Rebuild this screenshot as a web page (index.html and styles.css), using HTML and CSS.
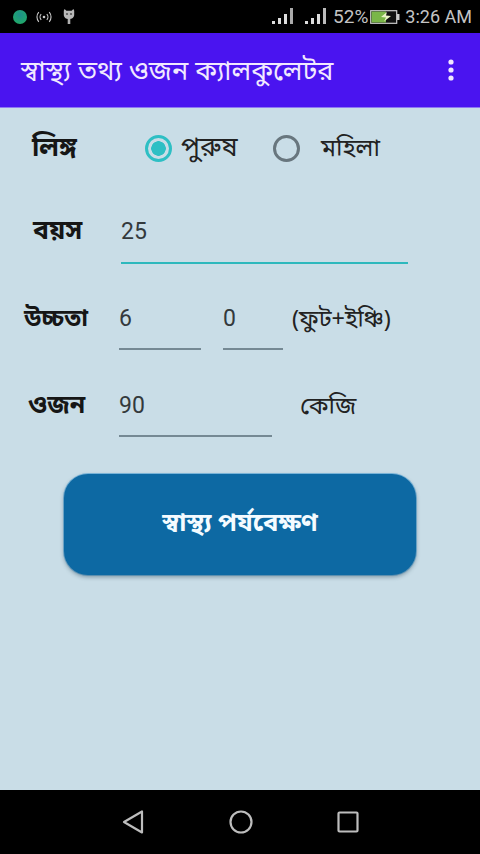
FILE: index.html
```html
<!DOCTYPE html>
<html lang="bn">
<head>
<meta charset="utf-8">
<title>স্বাস্থ্য তথ্য ওজন ক্যালকুলেটর</title>
<link rel="stylesheet" href="styles.css">
</head>
<body>
<div class="phone">
  <header class="status">
    <div class="status-left">
      <span class="dot"></span>
      <svg class="ic-hotspot" viewBox="0 0 18 12" width="18" height="12" aria-hidden="true"><circle cx="9" cy="6" r="1.3" fill="#ccc"/><path d="M6.2 3.2a4 4 0 0 0 0 5.6M11.8 3.2a4 4 0 0 1 0 5.6M3.8 1.2a7.2 7.2 0 0 0 0 9.6M14.2 1.2a7.2 7.2 0 0 1 0 9.6" fill="none" stroke="#ccc" stroke-width="1.1"/></svg>
      <svg class="ic-bug" viewBox="0 0 14 18" width="14" height="18" aria-hidden="true"><path d="M2.600 1l1.800 1.800h5.200L11.400 1l.8 1.800v4c0 2.600-2.200 4.400-5.200 4.400S1.800 9.400 1.800 6.800v-4z" fill="#b8b8b8"/><rect x="5.700" y="11" width="2.600" height="5" fill="#b0b0b0"/><circle cx="5" cy="6" r="1.100" fill="#555"/><circle cx="9" cy="6" r="1.100" fill="#555"/></svg>
    </div>
    <div class="status-right">
      <svg class="ic-signal" viewBox="0 0 22 18" width="22" height="18" aria-hidden="true"><rect x="0" y="13" width="3" height="3" fill="#ddd"/><rect x="6" y="10" width="3" height="6" fill="#ddd"/><rect x="12" y="6" width="3" height="10" fill="#ddd"/><rect x="18" y="0" width="3" height="16" fill="#aaa"/></svg>
      <svg class="ic-signal second" viewBox="0 0 22 18" width="22" height="18" aria-hidden="true"><rect x="0" y="13" width="3" height="3" fill="#ddd"/><rect x="6" y="10" width="3" height="6" fill="#ddd"/><rect x="12" y="6" width="3" height="10" fill="#ddd"/><rect x="18" y="0" width="3" height="16" fill="#bbb"/></svg>
      <span class="pct">52%</span>
      <svg class="ic-battery" viewBox="0 0 30 16" width="30" height="16" aria-hidden="true"><rect x=".7" y="1.700" width="26" height="12.600" fill="#111" stroke="#ccc" stroke-width="1.200"/><rect x="27" y="5" width="2.500" height="6" fill="#ccc"/><rect x="1.500" y="2.500" width="14.500" height="11" fill="#7ab648"/><path d="M17 3l-6 5 5 .5-2 4 7-5.500-5-.5z" fill="#e9f3c6"/></svg>
      <span class="time">3:26 AM</span>
    </div>
  </header>

  <div class="appbar">
    <h1 class="title">স্বাস্থ্য তথ্য ওজন ক্যালকুলেটর</h1>
    <svg class="ic-more" viewBox="0 0 8 24" width="8" height="24" aria-hidden="true"><circle cx="4" cy="4" r="2.600" fill="#f0e6ff"/><circle cx="4" cy="12" r="2.600" fill="#f0e6ff"/><circle cx="4" cy="20" r="2.600" fill="#f0e6ff"/></svg>
  </div>

  <main class="content">
    <div class="row row-gender">
      <span class="label label-gender">লিঙ্গ</span>
      <span class="radio radio-on"></span>
      <span class="opt opt-male">পুরুষ</span>
      <span class="radio radio-off"></span>
      <span class="opt opt-female">মহিলা</span>
    </div>

    <div class="row row-age">
      <span class="label label-age">বয়স</span>
      <div class="field field-age">25</div>
    </div>

    <div class="row row-height">
      <span class="label label-height">উচ্চতা</span>
      <div class="field field-feet">6</div>
      <div class="field field-inch">0</div>
      <span class="unit unit-height">(ফুট+ইঞ্চি)</span>
    </div>

    <div class="row row-weight">
      <span class="label label-weight">ওজন</span>
      <div class="field field-weight">90</div>
      <span class="unit unit-weight">কেজি</span>
    </div>

    <button class="cta" type="button">স্বাস্থ্য পর্যবেক্ষণ</button>
  </main>

  <nav class="navbar">
    <svg viewBox="0 0 24 26" width="24" height="26" aria-hidden="true"><path d="M21 2.500v21L3 13z" fill="none" stroke="#bdbdbd" stroke-width="2.200" stroke-linejoin="round"/></svg>
    <svg viewBox="0 0 26 26" width="26" height="26" aria-hidden="true"><circle cx="13" cy="13" r="10.500" fill="none" stroke="#bdbdbd" stroke-width="2.200"/></svg>
    <svg viewBox="0 0 24 24" width="24" height="24" aria-hidden="true"><rect x="2.500" y="2.500" width="19" height="19" rx="1" fill="none" stroke="#bdbdbd" stroke-width="2.200"/></svg>
  </nav>
</div>
</body>
</html>
```
FILE: styles.css
```css
* { box-sizing: border-box; }
html, body { margin: 0; padding: 0; }
body {
  width: 480px;
  height: 854px;
  overflow: hidden;
  font-family: "Noto Sans Bengali", "Noto Sans", Roboto, "Liberation Sans", sans-serif;
  background: #c9dde7;
}
.phone { width: 480px; height: 854px; display: flex; flex-direction: column; }

.status {
  height: 33px;
  background: #000;
  display: flex;
  align-items: center;
  justify-content: space-between;
  padding: 0 8px 0 13px;
  flex: none;
}
.status-left, .status-right { display: flex; align-items: center; }
.dot {
  width: 14px; height: 14px; border-radius: 50%;
  background: radial-gradient(circle at 50% 35%, #1d8f8a, #22b060);
}
.ic-hotspot { margin-left: 8px; }
.ic-bug { margin-left: 9px; }
.ic-signal.second { margin-left: 11px; }
.pct { margin-left: 6px; color: #c4c4c4; font: 19px Roboto, sans-serif; }
.ic-battery { margin-left: 2px; }
.time { margin-left: 5px; color: #c4c4c4; font: 18px Roboto, sans-serif; }

.appbar {
  height: 75px;
  background: #4a14f0;
  display: flex;
  align-items: center;
  justify-content: space-between;
  padding: 0 25px 0 21px;
  flex: none;
  border-bottom: 1px solid #8f78f2;
}
.title { margin: 6px 0 0; font-size: 27px; font-weight: 400; color: #f1e9ff; line-height: 1; white-space: nowrap; }

.content { flex: 1; min-height: 0; display: flex; flex-direction: column; }
.row { display: flex; align-items: flex-start; flex: none; }
.label { font-weight: 700; font-size: 24px; line-height: 30px; color: #161616; white-space: nowrap; padding-top: 2px; }
.field {
  font: 23px/32px Roboto, sans-serif;
  color: #33393c;
  border-bottom: 2px solid #75899400;
  border-bottom-color: #758994;
  height: 47px;
}
.opt, .unit { font-size: 24.500px; line-height: 30px; color: #222; white-space: nowrap; padding-top: 3px; }

.row-gender { height: 81px; align-items: center; }
.label-gender { margin-left: 32px; width: 99px; flex: none; font-size: 26px; }
.radio { width: 27px; height: 27px; border-radius: 50%; flex: none; }
.radio-on { margin-left: 14px; border: 3px solid #2ebfc4; background: radial-gradient(circle, #2ebfc4 0 7px, transparent 7.500px); }
.radio-off { margin-left: 35px; border: 3px solid #68767e; }
.opt-male { margin-left: 9px; width: 57px; font-size: 26.500px; }
.opt-female { margin-left: 21px; }

.row-age { height: 87px; padding-top: 27px; }
.label-age { margin-left: 33px; width: 88px; flex: none; font-size: 26.500px; }
.field-age { width: 287px; height: 48px; border-bottom: 2.500px solid #2db8bd; }

.row-height { height: 87px; padding-top: 27px; }
.label-height { margin-left: 24px; width: 95px; flex: none; }
.field-feet { width: 82px; }
.field-inch { width: 60px; margin-left: 22px; }
.unit-height { margin-left: 9px; font-size: 23.500px; }

.row-weight { height: 87px; padding-top: 27px; }
.label-weight { margin-left: 28px; width: 91px; flex: none; font-size: 25px; }
.field-weight { width: 153px; }
.unit-weight { margin-left: 28px; }

.cta {
  display: block;
  align-self: center;
  width: 352px;
  height: 101px;
  margin: 24px 0 0;
  border: 0;
  border-radius: 24px;
  background: #0d69a3;
  color: #f4fbff;
  font: 700 25.500px "Noto Sans Bengali", "Noto Sans", sans-serif;
  box-shadow: 0 2px 4px rgba(30, 60, 80, .45), 0 0 0 1px #7fbbe0;
}

.navbar {
  height: 64px;
  background: #000;
  flex: none;
  display: flex;
  align-items: center;
  padding: 0 120px 0 121px;
  justify-content: space-between;
}
```
